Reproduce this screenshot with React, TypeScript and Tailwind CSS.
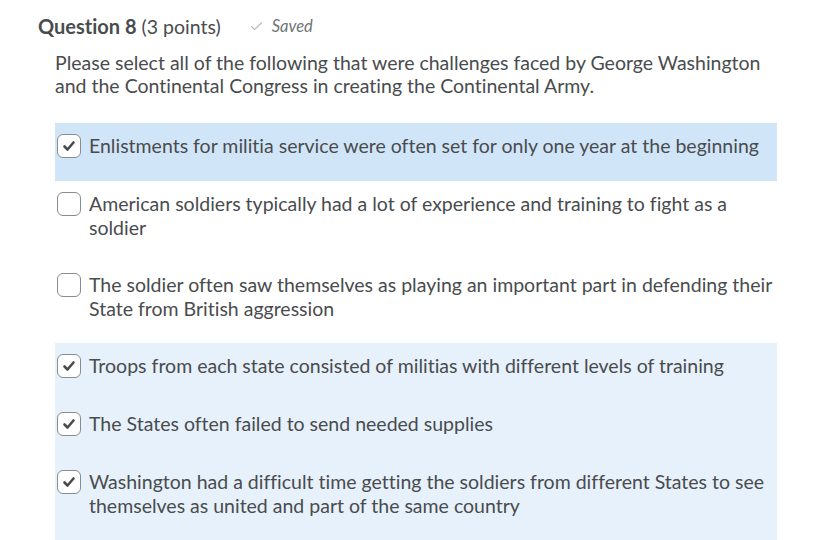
import { Check } from 'lucide-react';

interface Option {
  text: string
  checked: boolean
  strong?: boolean
}

const options: Option[] = [
  { text: 'Enlistments for militia service were often set for only one year at the beginning', checked: true, strong: true },
  { text: 'American soldiers typically had a lot of experience and training to fight as a soldier', checked: false },
  { text: 'The soldier often saw themselves as playing an important part in defending their State from British aggression', checked: false },
  { text: 'Troops from each state consisted of militias with different levels of training', checked: true },
  { text: 'The States often failed to send needed supplies', checked: true },
  { text: 'Washington had a difficult time getting the soldiers from different States to see themselves as united and part of the same country', checked: true },
];

function Checkbox({ checked }: { checked: boolean }) {
  return (
    <div className="flex h-[24px] w-[24px] shrink-0 items-center justify-center rounded-[6px] border border-[#868c8f] bg-white">
      {checked && (
        <svg width="14" height="14" viewBox="0 0 14 14" fill="none">
          <path d="M2.5 7.5 L5.5 10.5 L11.5 3.5" stroke="#494c4e" strokeWidth="2.6" strokeLinecap="round" strokeLinejoin="round" />
        </svg>
      )}
    </div>
  );
}

export default function App() {
  return (
    <div className="h-[540px] w-[813px] overflow-hidden bg-white text-[#494c4e] font-['Lato',sans-serif] [font-variant-ligatures:none]">
      <div className="flex items-baseline pl-[38px] pt-[11px]">
        <span className="text-[20px] font-bold">Question 8</span>
        <span className="ml-[5px] text-[19.5px]">(3 points)</span>
        <span className="ml-[28px] flex items-center gap-[8px] text-[16.5px] italic text-[#6e7376]">
          <Check size={15} strokeWidth={1.75} className="text-[#b4b8bb]" />
          Saved
        </span>
      </div>
      <p className="ml-[55px] mt-[10px] mr-[40px] text-[19.5px] leading-[23px]">
        Please select all of the following that were challenges faced by George Washington and the Continental Congress in creating the Continental Army.
      </p>
      <div className="ml-[55px] mr-[36px] mt-[26px]">
        {options.map((o) => (
          <div
            key={o.text}
            className={`flex gap-[8px] pl-[2px] pr-[4px] pt-[11px] pb-[23px] ${o.checked ? (o.strong ? 'bg-[#d1e5f8]' : 'bg-[#e7f1fb]') : ''}`}
          >
            <Checkbox checked={o.checked} />
            <span className="text-[19.5px] leading-[23.5px]">{o.text}</span>
          </div>
        ))}
      </div>
    </div>
  );
}
